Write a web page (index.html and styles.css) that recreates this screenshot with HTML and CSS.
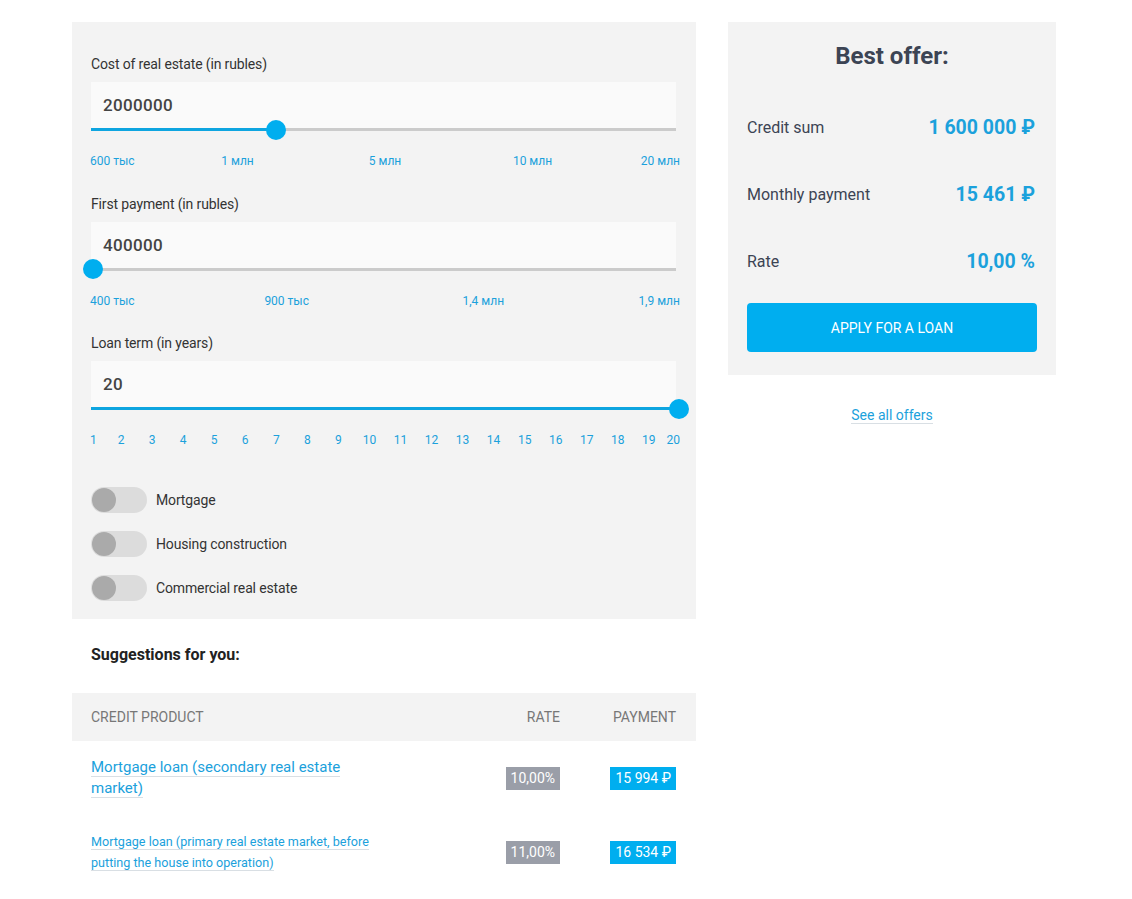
FILE: index.html
```html
<!DOCTYPE html>
<html lang="en">
<head>
<meta charset="utf-8" />
<title>Mortgage calculator</title>
<link rel="stylesheet" href="styles.css">
</head>
<body>
<div class="page">

  <!-- ===== Left column: calculator + suggestions ===== -->
  <main class="main">
    <section class="calc">

      <div class="field">
        <div class="label">Cost of real estate (in rubles)</div>
        <div class="input">2000000</div>
        <div class="track"><div class="fill" style="width:31.6%"></div><span class="thumb" style="left:31.6%"></span></div>
        <div class="ticks">
          <span class="tick">600 тыс</span><span class="tick">1 млн</span><span class="tick">5 млн</span><span class="tick">10 млн</span><span class="tick">20 млн</span>
        </div>
      </div>

      <div class="field">
        <div class="label">First payment (in rubles)</div>
        <div class="input">400000</div>
        <div class="track"><div class="fill" style="width:0%"></div><span class="thumb" style="left:0.3%"></span></div>
        <div class="ticks">
          <span class="tick">400 тыс</span><span class="tick">900 тыс</span><span class="tick">1,4 млн</span><span class="tick">1,9 млн</span>
        </div>
      </div>

      <div class="field">
        <div class="label">Loan term (in years)</div>
        <div class="input">20</div>
        <div class="track"><div class="fill" style="width:100%"></div><span class="thumb" style="left:100.5%"></span></div>
        <div class="ticks">
          <span class="tick">1</span><span class="tick">2</span><span class="tick">3</span><span class="tick">4</span><span class="tick">5</span><span class="tick">6</span><span class="tick">7</span><span class="tick">8</span><span class="tick">9</span><span class="tick">10</span><span class="tick">11</span><span class="tick">12</span><span class="tick">13</span><span class="tick">14</span><span class="tick">15</span><span class="tick">16</span><span class="tick">17</span><span class="tick">18</span><span class="tick">19</span><span class="tick">20</span>
        </div>
      </div>

      <div class="toggles">
        <label class="toggle"><span class="switch"><span class="knob"></span></span>Mortgage</label>
        <label class="toggle"><span class="switch"><span class="knob"></span></span>Housing construction</label>
        <label class="toggle"><span class="switch"><span class="knob"></span></span>Commercial real estate</label>
      </div>
    </section>

    <h3 class="sugTitle">Suggestions for you:</h3>

    <div class="table">
      <div class="row head">
        <div>Credit product</div>
        <div class="num">Rate</div>
        <div class="num">Payment</div>
      </div>
      <div class="row">
        <div><a href="#" class="prod">Mortgage loan (secondary real estate market)</a></div>
        <div class="num"><span class="badge grey">10,00%</span></div>
        <div class="num"><span class="badge blue">15 994 ₽</span></div>
      </div>
      <div class="row">
        <div><a href="#" class="prod small">Mortgage loan (primary real estate market, before putting the house into operation)</a></div>
        <div class="num"><span class="badge grey">11,00%</span></div>
        <div class="num"><span class="badge blue">16 534 ₽</span></div>
      </div>
    </div>
  </main>

  <!-- ===== Right column: best offer ===== -->
  <aside class="side">
    <section class="offer">
      <h2>Best offer:</h2>
      <div class="line"><span>Credit sum</span><b>1 600 000 ₽</b></div>
      <div class="line"><span>Monthly payment</span><b>15 461 ₽</b></div>
      <div class="line"><span>Rate</span><b>10,00 %</b></div>
      <button class="apply">Apply for a loan</button>
    </section>
    <div class="all"><a href="#">See all offers</a></div>
  </aside>

</div>
</body>
</html>
```

FILE: styles.css
```css
/* ===== Base ===== */
:root{
  --card:#f3f3f3;
  --blue:#00aeef;
  --link:#1ba1dc;
  --ink:#333;
  --slate:#3c4454;
}
*{box-sizing:border-box}
html,body{margin:0;background:#fff;color:var(--ink);font:400 14px/20px Roboto, "Liberation Sans", Arial, sans-serif}
a{color:var(--link);text-decoration:none}

.page{display:flex;gap:32px;padding:22px 0 0 72px}
.main{width:624px}
.side{width:328px}

/* ===== Calculator card ===== */
.calc{background:var(--card);padding:32px 20px 18px 19px}
.field + .field{margin-top:24.5px}
.label{font-size:14px;line-height:20px;color:var(--ink);margin-bottom:8px;letter-spacing:-.01em}
.input{height:46px;background:#fafafa;padding:0 12px;font-size:17px;font-weight:500;line-height:47px;color:#444;letter-spacing:.02em}

.track{position:relative;height:3px;background:#cbcbcb}
.fill{height:3px;background:#0ea5e0}
.thumb{position:absolute;top:50%;width:20px;height:20px;border-radius:50%;background:var(--blue);transform:translate(-50%,-50%)}

/* tick labels sit on 0..100% of the scale */
.ticks{display:flex;justify-content:space-between;margin:22px -4px 0 -1px;font-size:12px;line-height:16px;color:var(--link)}
.tick{width:0;display:flex;justify-content:center;white-space:nowrap}
.tick:first-child{justify-content:flex-start}
.tick:last-child{justify-content:flex-end}

/* ===== Toggles ===== */
.toggles{margin-top:39px;display:flex;flex-direction:column;gap:18px}
.toggle{display:flex;align-items:center;gap:9px;font-size:14px;color:var(--ink);height:26px;letter-spacing:-.01em}
.switch{width:56px;height:26px;border-radius:13px;background:#dcdcdc;display:flex;align-items:center;padding-left:1px}
.knob{width:24px;height:24px;border-radius:50%;background:#aaa}

/* ===== Suggestions ===== */
.sugTitle{margin:26px 0 28px 19px;font-size:16px;line-height:20px;font-weight:700;color:#222}
.row{display:grid;grid-template-columns:290px 1fr 116px;align-items:center;padding:16px 20px 16px 19px}
.row.head{background:var(--card);height:48px;padding-top:0;padding-bottom:0;text-transform:uppercase;color:#777;font-size:14px}
.num{text-align:right}
.prod{font-size:15px;line-height:21px;border-bottom:1px solid #d9dfe4}
.prod.small{font-size:12.6px}
.badge{display:inline-block;height:23px;line-height:23px;padding:0 5px;color:#fff;font-size:14px}
.badge.grey{background:#9a9ea8}
.badge.blue{background:var(--blue)}

/* ===== Best offer card ===== */
.offer{background:var(--card);padding:19px 19px 23px}
.offer h2{margin:0 0 23px;text-align:center;font-size:24px;line-height:30px;font-weight:700;color:var(--slate)}
.line{height:67px;display:flex;align-items:center;justify-content:space-between;font-size:16px;color:var(--slate)}
.line b{font-size:19.5px;font-weight:700;color:var(--link);margin-right:2px}
.apply{display:block;width:100%;height:49px;margin-top:8px;border:0;border-radius:4px;background:var(--blue);color:#fff;font:400 14px Roboto, "Liberation Sans", Arial, sans-serif;text-transform:uppercase;cursor:pointer}
.all{margin-top:30px;text-align:center}
.all a{font-size:14px;line-height:20px;border-bottom:1px solid #d9dfe4}
```
